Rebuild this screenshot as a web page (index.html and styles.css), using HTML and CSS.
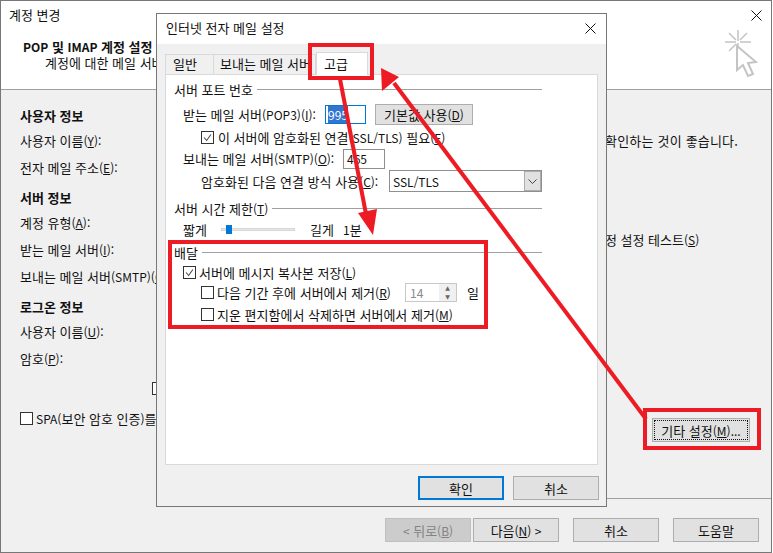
FILE: index.html
```html
<!DOCTYPE html>
<html lang="ko">
<head>
<meta charset="utf-8">
<title>계정 변경</title>
<link rel="stylesheet" href="styles.css">
</head>
<body>
<div class="screen">
  <section class="outer">
    <header class="outer-head">
      <div class="title-row"><span>계정 변경</span><svg class="close" viewBox="0 0 11 11"><path d="M.5.5l10 10M10.500.5l-10 10"/></svg></div>
      <div class="head-main">
        <div>
          <h1><span class="en">POP</span> 및 <span class="en">IMAP</span> 계정 설정</h1>
          <p>계정에 대한 메일 서버 설정을 입력하십시오.</p>
        </div>
        <svg class="wizard" viewBox="0 0 34 50"><path d="M14 1v11M14 14v11M1 13h11M16 13h11M5 4l7 7M23 4l-7 7M5 22l7-7" fill="none"/><path class="ptr" d="M13 17v24l6-5 5 11 5-2-5-11 8-1z"/></svg>
      </div>
    </header>
    <div class="outer-body">
      <div class="form-col">
        <h2 class="first">사용자 정보</h2>
        <div class="line">사용자 이름<span class="en">(<u>Y</u>):</span></div>
        <div class="line">전자 메일 주소<span class="en">(<u>E</u>):</span></div>
        <h2>서버 정보</h2>
        <div class="line">계정 유형<span class="en">(<u>A</u>):</span></div>
        <div class="line">받는 메일 서버<span class="en">(<u>I</u>):</span></div>
        <div class="line">보내는 메일 서버<span class="en">(SMTP)(<u>O</u>):</span></div>
        <h2>로그온 정보</h2>
        <div class="line">사용자 이름<span class="en">(<u>U</u>):</span></div>
        <div class="line">암호<span class="en">(<u>P</u>):</span></div>
        <div class="remember"><span class="check plain"></span></div>
        <label class="spa"><span class="check"></span><span><span class="en">SPA(</span>보안 암호 인증<span class="en">)</span>를 사용한 로그온 필요<span class="en">(<u>Q</u>)</span></span></label>
      </div>
      <div class="side-col">
        <p class="hint">확인하는 것이 좋습니다.</p>
        <p class="test">계정 설정 테스트<span class="en">(<u>S</u>)</span></p>
        <div class="more-wrap"><button class="btn focus-dotted">기타 설정<span class="en">(<u>M</u>)...</span></button></div>
      </div>
    </div>
    <footer class="outer-foot">
      <button class="btn off"><span class="en">&lt;</span> 뒤로<span class="en">(<u>B</u>)</span></button>
      <button class="btn next">다음<span class="en">(<u>N</u>) &gt;</span></button>
      <button class="btn gap">취소</button>
      <button class="btn gap">도움말</button>
    </footer>
  </section>

  <section class="dialog">
    <div class="dlg-title"><span>인터넷 전자 메일 설정</span><svg class="close" viewBox="0 0 11 11"><path d="M.5.5l10 10M10.500.5l-10 10"/></svg></div>
    <div class="dlg-main">
      <nav class="tabs">
        <span class="tab t1">일반</span>
        <span class="tab t2">보내는 메일 서버</span>
        <span class="tab active">고급</span>
      </nav>
      <div class="panel">
        <div class="legend l1"><span>서버 포트 번호</span></div>
        <div class="row r1"><span class="w1">받는 메일 서버<span class="en">(POP3)(<u>I</u>):</span></span><span class="field blue"><mark class="en">995</mark></span><button class="btn small">기본값 사용<span class="en">(<u>D</u>)</span></button></div>
        <label class="row r2"><span class="check on"><svg viewBox="0 0 13 13"><path d="M2.500 6.500l3 3.500 5-7"/></svg></span><span>이 서버에 암호화된 연결<span class="en">(SSL/TLS)</span> 필요<span class="en">(<u>E</u>)</span></span></label>
        <div class="row r3"><span class="w2">보내는 메일 서버<span class="en">(SMTP)(<u>O</u>):</span></span><span class="field smtp en">465</span></div>
        <div class="row r4"><span class="w3">암호화된 다음 연결 방식 사용<span class="en">(<u>C</u>):</span></span><span class="select"><span class="en">SSL/TLS</span><i><svg viewBox="0 0 9 5"><path d="M.5.500l4 4 4-4"/></svg></i></span></div>
        <div class="legend l2"><span>서버 시간 제한<span class="en">(<u>T</u>)</span></span></div>
        <div class="row r5"><span class="w4">짧게</span><span class="slider"><b></b></span><span class="w5">길게</span><span><span class="en">1</span>분</span></div>
        <div class="legend l3"><span>배달</span></div>
        <label class="row r6"><span class="check on"><svg viewBox="0 0 13 13"><path d="M2.500 6.500l3 3.500 5-7"/></svg></span><span>서버에 메시지 복사본 저장<span class="en">(<u>L</u>)</span></span></label>
        <div class="row r7"><span class="check"></span><span class="w6">다음 기간 후에 서버에서 제거<span class="en">(<u>R</u>)</span></span><span class="spin"><span class="en">14</span><i><em>▲</em><em>▼</em></i></span><span class="days">일</span></div>
        <label class="row r8"><span class="check"></span><span>지운 편지함에서 삭제하면 서버에서 제거<span class="en">(<u>M</u>)</span></span></label>
      </div>
      <div class="dlg-foot">
        <button class="btn primary">확인</button>
        <button class="btn">취소</button>
      </div>
    </div>
  </section>

  <svg class="marks" viewBox="0 0 773 553">
    <g fill="none" stroke="#ed1c24" stroke-width="4">
      <rect x="310" y="45" width="62" height="33"/>
      <rect x="170" y="242" width="316" height="85"/>
      <rect x="645" y="410" width="114" height="38"/>
      <path d="M340 79l26 135"/>
      <path d="M646 419L394 83"/>
    </g>
    <path fill="#ed1c24" d="M358 213l19-4-4 26zM381 68l18 9-17 14z"/>
  </svg>
</div>
</body>
</html>
```
FILE: styles.css
```css
* { box-sizing: border-box; }
html, body { margin: 0; padding: 0; }
body {
  font-family: "Noto Sans CJK KR", "Noto Sans", sans-serif;
  font-size: 13px;
  color: #111;
  background: #fff;
}
.screen { position: relative; width: 773px; height: 553px; overflow: hidden; }
.en { font-size: 12px; }
u { text-underline-offset: 1px; }
p, h1, h2 { margin: 0; }

.outer {
  width: 772px;
  height: 553px;
  border: 1px solid #777;
  display: flex;
  flex-direction: column;
  background: #f0f0f0;
}
.outer-head {
  height: 89px;
  flex: none;
  background: #fff;
  border-bottom: 1px solid #a0a0a0;
  padding: 3px 9px 0 8px;
}
.title-row { display: flex; justify-content: space-between; align-items: center; height: 20px; }
.close { width: 11px; height: 11px; fill: none; stroke: #111; stroke-width: 1; }
.title-row .close { margin-top: 2px; }
.head-main { display: flex; justify-content: space-between; padding: 14px 19px 0 14px; }
.head-main h1 { font-size: 13px; font-weight: 700; line-height: 17px; }
.head-main .en { font-size: 12px; }
.head-main p { padding-left: 22px; line-height: 15px; }
.wizard { width: 34px; height: 50px; margin: -9px -15px 0 0; stroke: #c4c4c4; stroke-width: 1.500; }
.wizard .ptr { fill: #fff; stroke: #c4c4c4; stroke-width: 2; }

.outer-body { flex: 1; display: flex; justify-content: space-between; min-height: 0; }
.form-col { width: 400px; padding: 17px 0 0 19px; }
.form-col h2 { font-size: 13px; font-weight: 700; height: 18px; line-height: 18px; margin-top: 12px; }
.form-col h2.first { margin-top: 0; }
.line { height: 18px; line-height: 18px; margin-top: 9px; white-space: nowrap; }
.form-col h2 + .line { margin-top: 7px; }
.remember { display: flex; justify-content: flex-end; padding: 14px 241px 0 0; height: 27px; }
.check.plain { width: 8px; height: 13px; flex: none; }
.spa { display: flex; align-items: center; gap: 3px; margin-top: 14px; white-space: nowrap; height: 18px; }
.side-col { width: 166px; padding: 42px 0 0 0; }
.hint { line-height: 18px; white-space: nowrap; letter-spacing: .2px; }
.test { margin: 81px 0 0 -12px; line-height: 18px; white-space: nowrap; }
.more-wrap {
  margin-top: 169px;
  display: flex;
  justify-content: flex-end;
  padding-right: 21px;
}
.focus-dotted { width: 98px; height: 24px; border: 2px solid #0078d7; outline: 1px dotted #111; outline-offset: -3px; }

.outer-foot {
  height: 54px;
  flex: none;
  display: flex;
  padding: 20px 0 0 384px;
  gap: 2px;
  background: linear-gradient(to right, transparent 605px, #a0a0a0 605px) top/100% 1px no-repeat;
}
.outer-foot .btn { width: 86px; height: 24px; }
.outer-foot .gap { margin-left: 12px; }

.btn {
  font: inherit;
  color: #111;
  background: #e1e1e1;
  border: 1px solid #adadad;
  padding: 0;
  display: inline-block;
  line-height: 1;
  flex: none;
}
.btn.off { background: #ccc; color: #838383; border-color: #bfbfbf; }
.btn.primary { border: 2px solid #0078d7; }

.dialog {
  position: absolute;
  left: 156px;
  top: 13px;
  width: 451px;
  height: 494px;
  background: #f0f0f0;
  border: 1px solid #777;
  display: flex;
  flex-direction: column;
}
.dlg-title {
  height: 30px;
  flex: none;
  background: #fff;
  display: flex;
  justify-content: space-between;
  align-items: center;
  padding: 0 10px 4px 9px;
}
.dlg-title .close { margin-top: 2px; }
.dlg-main { flex: 1; padding: 8px 7px 0 8px; display: flex; flex-direction: column; }
.tabs { display: flex; height: 22px; flex: none; align-items: flex-end; }
.tab { display: flex; align-items: center; height: 20px; padding-bottom: 2px; border: 1px solid #d9d9d9; border-bottom: 0; background: #f0f0f0; margin-right: -1px; white-space: nowrap; overflow: hidden; }
.t1 { width: 49px; padding-left: 7px; }
.t2 { width: 103px; padding-left: 6px; }
.active { width: 52px; height: 23px; background: #fff; position: relative; margin-bottom: -1px; margin-left: 1px; padding-left: 7px; }
.panel { height: 391px; flex: none; width: 433px; background: #fff; border: 1px solid #d9d9d9; padding: 5px 0 0 8px; }
.legend { display: flex; align-items: center; gap: 4px; height: 18px; width: 368px; }
.legend::after { content: ""; flex: 1; height: 1px; background: #a0a0a0; }
.row { display: flex; align-items: center; height: 20px; white-space: nowrap; }
.r1 { margin-top: 6px; padding-left: 9px; }
.w1 { width: 142px; }
.field { height: 19px; border: 1px solid #8f8f8f; display: flex; align-items: center; background: #fff; padding-left: 2px; }
.field.blue { width: 41px; border-color: #0078d7; }
mark { background: #3374d0; color: #fff; }
.small { width: 98px; height: 21px; margin-left: 9px; }
.r2 { margin-top: 3px; padding-left: 27px; gap: 4px; }
.check { width: 13px; height: 13px; border: 1px solid #333; background: #fff; flex: none; display: inline-block; }
.check svg { display: block; width: 11px; height: 11px; fill: none; stroke: #444; stroke-width: 1.200; }
.r3 { margin-top: 1px; height: 21px; padding-left: 9px; }
.w2 { width: 160px; }
.field.smtp { width: 42px; height: 20px; padding-left: 3px; }
.r4 { margin-top: 1px; height: 22px; padding-left: 27px; }
.w3 { width: 188px; }
.select { width: 153px; height: 22px; border: 1px solid #8f8f8f; display: flex; justify-content: space-between; padding: 0 0 0 3px; align-items: center; }
.select i { width: 17px; height: 20px; background: #e1e1e1; border: 1px solid #adadad; display: flex; align-items: center; justify-content: center; }
.select svg { width: 9px; height: 5px; fill: none; stroke: #444; }
.l2 { margin-top: 7px; }
.r5 { margin-top: 2px; padding-left: 9px; }
.w4 { width: 38px; }
.slider { width: 74px; height: 3px; background: #e7e7e7; border: 1px solid #d6d6d6; position: relative; margin-right: 15px; }
.slider b { position: absolute; left: 4px; top: -4px; width: 6px; height: 9px; background: #0078d7; }
.w5 { width: 33px; }
.l3 { margin-top: 4px; }
.r6 { margin-top: 2px; padding-left: 9px; gap: 3px; height: 19px; }
.r7 { margin-top: 1px; padding-left: 27px; gap: 3px; height: 19px; }
.w6 { width: 185px; }
.spin { width: 52px; height: 19px; border: 1px solid #c8c8c8; display: flex; justify-content: space-between; align-items: center; padding-left: 4px; color: #8a8a8a; }
.spin i { width: 17px; height: 17px; display: flex; flex-direction: column; font-style: normal; background: #f0f0f0; }
.spin em { flex: 1; font-style: normal; font-size: 6px; line-height: 8px; text-align: center; color: #666; font-family: "DejaVu Sans", sans-serif; }
.days { margin-left: 7px; }
.r8 { margin-top: 2px; padding-left: 27px; gap: 3px; }
.dlg-foot { display: flex; justify-content: flex-end; gap: 9px; padding: 11px 0 0; }
.dlg-foot .btn { width: 86px; height: 24px; }

.marks { position: absolute; left: 0; top: 0; width: 773px; height: 553px; pointer-events: none; }
```
